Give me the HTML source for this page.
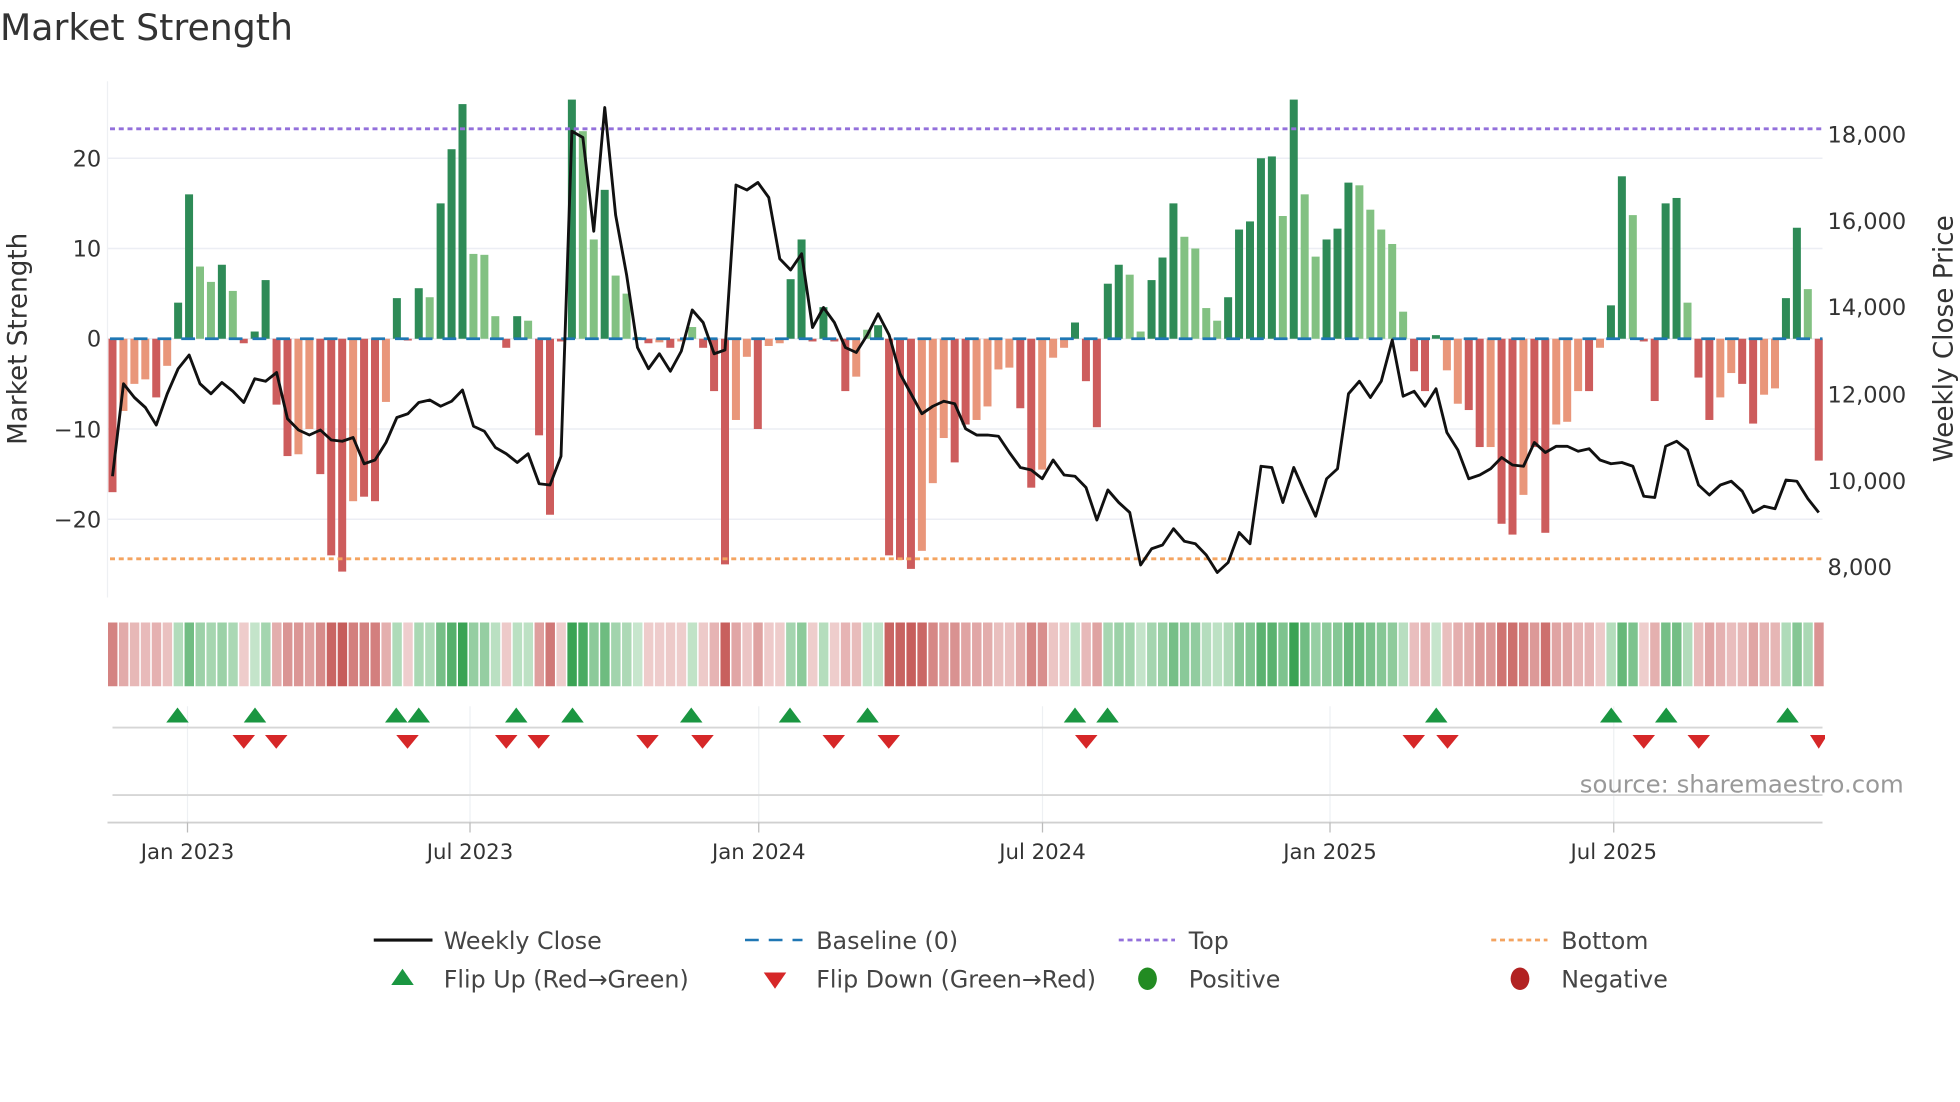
<!DOCTYPE html>
<html><head><meta charset="utf-8"><style>
html,body{margin:0;padding:0;background:#fff;width:1960px;height:1102px;overflow:hidden}
svg{display:block}
text{font-family:"DejaVu Sans","Liberation Sans",sans-serif;fill:#333}
</style></head><body>
<svg id="s" width="1960" height="1102" viewBox="0 0 1568 881.6" xmlns="http://www.w3.org/2000/svg">
<text x="0" y="32" font-size="29" fill="#333">Market Strength</text>
<g id="grid"></g>
<g id="bars"></g>
<g id="heat"></g>
<g id="marks"></g>
<g id="axes"></g>
<text x="1523" y="634" font-size="19.5" text-anchor="end" style="fill:#999">source: sharemaestro.com</text>
<g font-size="19">
<line x1="299" y1="752" x2="346" y2="752" stroke="#111" stroke-width="2.5"/>
<text x="355" y="759" style="fill:#444">Weekly Close</text>
<line x1="596" y1="752" x2="642" y2="752" stroke="#1f77b4" stroke-width="2" stroke-dasharray="11,8"/>
<text x="653" y="759" style="fill:#444">Baseline (0)</text>
<line x1="895" y1="752" x2="940" y2="752" stroke="#9370db" stroke-width="2.2" stroke-dasharray="4,3"/>
<text x="951" y="759" style="fill:#444">Top</text>
<line x1="1193" y1="752" x2="1238" y2="752" stroke="#f4a460" stroke-width="2.2" stroke-dasharray="4,3"/>
<text x="1249" y="759" style="fill:#444">Bottom</text>
<polygon points="313,788 322,775 331,788" fill="#1a9641"/>
<text x="355" y="790" style="fill:#444">Flip Up (Red→Green)</text>
<polygon points="611,778 620,791 629,778" fill="#d62728"/>
<text x="653" y="790" style="fill:#444">Flip Down (Green→Red)</text>
<ellipse cx="918" cy="783" rx="7.5" ry="9" fill="#228b22"/>
<text x="951" y="790" style="fill:#444">Positive</text>
<ellipse cx="1216" cy="783" rx="7.5" ry="9" fill="#b22222"/>
<text x="1249" y="790" style="fill:#444">Negative</text>
</g>
<text transform="translate(21,271) rotate(-90)" font-size="21" text-anchor="middle" style="fill:#333">Market Strength</text>
<text transform="translate(1562,271) rotate(-90)" font-size="21" text-anchor="middle" style="fill:#333">Weekly Close Price</text>
</svg>
<script>
var NS="http://www.w3.org/2000/svg";
function el(p,t,a){var e=document.createElementNS(NS,t);for(var k in a)e.setAttribute(k,a[k]);document.getElementById(p).appendChild(e);return e;}
var V=[[-17,1],[-8,0],[-5,0],[-4.5,0],[-6.5,1],[-3,0],[4,1],[16,1],[8,0],[6.3,0],[8.2,1],[5.3,0],[-0.5,1],[0.8,1],[6.5,1],[-7.3,1],[-13,1],[-12.8,0],[-10,0],[-15,1],[-24,1],[-25.8,1],[-18,0],[-17.5,1],[-18,1],[-7,0],[4.5,1],[-0.2,1],[5.6,1],[4.6,0],[15,1],[21,1],[26,1],[9.4,0],[9.3,0],[2.5,0],[-1,1],[2.5,1],[2,0],[-10.7,1],[-19.5,1],[-0.3,1],[26.5,1],[23,0],[11,0],[16.5,1],[7,0],[5,0],[0.2,0],[-0.5,1],[-0.4,0],[-1,1],[-0.3,0],[1.3,0],[-1,1],[-5.8,1],[-25,1],[-9,0],[-2,0],[-10,1],[-0.8,0],[-0.5,0],[6.6,1],[11,1],[-0.3,1],[3.5,1],[-0.3,1],[-5.8,1],[-4.2,0],[1,0],[1.5,1],[-24,1],[-24.5,1],[-25.5,1],[-23.5,0],[-16,0],[-11,0],[-13.7,1],[-9.5,1],[-9,0],[-7.5,0],[-3.4,0],[-3.2,0],[-7.7,1],[-16.5,1],[-14.5,0],[-2.1,0],[-1,0],[1.8,1],[-4.7,1],[-9.8,1],[6.1,1],[8.2,1],[7.1,0],[0.8,0],[6.5,1],[9,1],[15,1],[11.3,0],[10,0],[3.4,0],[2,0],[4.6,1],[12.1,1],[13,1],[20,1],[20.2,1],[13.6,0],[26.5,1],[16,0],[9.1,0],[11,1],[12.2,1],[17.3,1],[17,0],[14.3,0],[12.1,0],[10.5,0],[3,0],[-3.6,1],[-5.8,1],[0.4,1],[-3.5,0],[-7.2,0],[-7.9,1],[-12,1],[-12,0],[-20.5,1],[-21.7,1],[-17.3,0],[-12,1],[-21.5,1],[-9.5,0],[-9.2,0],[-5.8,0],[-5.8,1],[-1,0],[3.7,1],[18,1],[13.7,0],[-0.3,1],[-6.9,1],[15,1],[15.6,1],[4,0],[-4.3,1],[-9,1],[-6.5,0],[-3.8,0],[-5,1],[-9.4,1],[-6.2,0],[-5.5,0],[4.5,1],[12.3,1],[5.5,0],[-13.5,1]];
var N=V.length,x0=90,x1=1455,dx=(x1-x0)/(N-1);
function X(i){return x0+i*dx}
function Y(v){return 271-v*7.22}
[20,10,0,-10,-20].forEach(function(v){el("grid","line",{x1:86,x2:1458,y1:Y(v),y2:Y(v),stroke:"#eceef4","stroke-width":1.2});});
[150,376,607,834,1064,1291].forEach(function(x){el("grid","line",{x1:x,x2:x,y1:565,y2:658,stroke:"#eef0f3","stroke-width":1});});
el("grid","line",{x1:86,x2:86,y1:65,y2:478,stroke:"#eef0f3","stroke-width":1});
V.forEach(function(b,i){var v=b[0],d=b[1],c;
 if(v>=0)c=d?"#2e8b57":"#82c182";else c=d?"#cd5c5c":"#e9967a";
 var y=Math.min(Y(v),271),h=Math.abs(v*7.22);
 el("bars","rect",{x:X(i)-3.2,y:y,width:6.4,height:Math.max(h,1),fill:c});});
el("bars","line",{x1:88,x2:1458,y1:271,y2:271,stroke:"#1f77b4","stroke-width":2.2,"stroke-dasharray":"11,8"});
el("bars","line",{x1:88,x2:1458,y1:103,y2:103,stroke:"#9370db","stroke-width":2.3,"stroke-dasharray":"4,3"});
el("bars","line",{x1:88,x2:1458,y1:447,y2:447,stroke:"#f4a460","stroke-width":2.3,"stroke-dasharray":"4,3"});
var L=[381,307,318,326,340,315,295,284,307,315,306,313,322,303,305,298,335,344,348,344,352,353,350,371,368,354,334,331,322,320,325,321,312,341,345,358,363,370,363,387,388,365,105,110,185,86,172,220,278,295,283,297,281,248,258,283,280,148,152,146,158,207,216,203,262,246,258,278,282,268,251,268,299,315,331,325,321,323,343,348,348,349,362,374,376,383,368,380,381,390,416,392,402,410,452,439,436,423,433,435,444,458,450,426,435,373,374,402,374,394,413,383,375,315,305,318,305,272,317,313,325,311,346,360,383,380,375,366,372,373,354,362,357,357,361,359,368,371,370,373,397,398,357,353,360,388,396,388,385,393,410,405,407,384,385,399,410];
var ldx=(1455-90)/(L.length-1),pts=L.map(function(y,i){return (90+i*ldx).toFixed(1)+","+y}).join(" ");
el("bars","polyline",{points:pts,fill:"none",stroke:"#111","stroke-width":2.3,"stroke-linejoin":"round"});
function mix(a,b,t){return "rgb("+a.map(function(c,k){return Math.round(c+(b[k]-c)*t)}).join(",")+")"}
V.forEach(function(b,i){var v=b[0],t=Math.min(Math.abs(v)/26,1);t=0.15+0.85*t;
 var c=v>=0?mix([225,242,227],[58,163,84],t):mix([246,226,226],[198,92,90],t);
 el("heat","rect",{x:X(i)-4.2+0.6,y:498,width:dx-1.2,height:51,fill:c});});
el("marks","line",{x1:90,x2:1458,y1:582,y2:582,stroke:"#d6d6d6","stroke-width":1.5});
el("marks","line",{x1:90,x2:1458,y1:636,y2:636,stroke:"#d6d6d6","stroke-width":1.5});
el("marks","line",{x1:86,x2:1458,y1:658,y2:658,stroke:"#d0d0d0","stroke-width":1.5});
[142,204,317,335,413,458,553,632,694,860,886,1149,1289,1333,1430].forEach(function(x){el("marks","polygon",{points:(x-9)+",578 "+x+",566 "+(x+9)+",578",fill:"#1a9641"});});
[195,221,326,405,431,518,562,667,711,869,1131,1158,1315,1359].forEach(function(x){el("marks","polygon",{points:(x-9)+",588 "+x+",599 "+(x+9)+",588",fill:"#d62728"});});
el("marks","polygon",{points:"1448,588 1455,599 1460,591 1460,588",fill:"#d62728"});
[["Jan 2023",150],["Jul 2023",376],["Jan 2024",607],["Jul 2024",834],["Jan 2025",1064],["Jul 2025",1291]].forEach(function(t){
 el("axes","line",{x1:t[1],x2:t[1],y1:658,y2:666,stroke:"#bbb","stroke-width":1});
 var e=el("axes","text",{x:t[1],y:687,"font-size":17,"text-anchor":"middle"});e.textContent=t[0];});
[["20",127],["10",199],["0",271],["\u221210",344],["\u221220",416]].forEach(function(t){var e=el("axes","text",{x:81,y:t[1]+6,"font-size":18,"text-anchor":"end"});e.textContent=t[0];});
[["18,000",108],["16,000",177],["14,000",246],["12,000",316],["10,000",385],["8,000",454]].forEach(function(t){var e=el("axes","text",{x:1462,y:t[1]+6,"font-size":18});e.textContent=t[0];});
</script>
</body></html>
